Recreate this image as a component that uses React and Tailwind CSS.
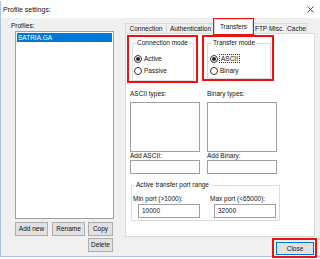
import React from 'react'

function Radio({ checked }) {
  return (
    <span className="flex h-[8px] w-[8px] shrink-0 items-center justify-center rounded-full border border-[#333] bg-white">
      {checked && <span className="h-[4px] w-[4px] rounded-full bg-[#222]" />}
    </span>
  )
}

function Btn({ children, className = '' }) {
  return (
    <div className={`flex h-[14px] items-center justify-center border border-[#adadad] bg-[#e1e1e1] ${className}`}>
      {children}
    </div>
  )
}

function Tab({ label, w, selected }) {
  if (selected) {
    return (
      <div className={`relative z-10 -mb-px flex h-[15px] items-center justify-center border-x border-t border-[#d9d9d9] bg-white ${w}`}>
        {label}
      </div>
    )
  }
  return (
    <div className={`flex h-[10px] items-center justify-center border-l border-t border-[#d9d9d9] bg-[#f0f0f0] last:border-r ${w}`}>
      {label}
    </div>
  )
}

export default function App() {
  return (
    <div className="relative h-[259px] w-[320px] overflow-hidden bg-white font-['Liberation_Sans',Arial,sans-serif] text-[6.5px] leading-[8px] text-[#111]">
      {/* dialog window */}
      <div className="mt-px flex h-[256px] w-[320px] flex-col border-b border-l border-[#a9c3e6]">
        {/* title bar */}
        <div className="flex h-[17px] shrink-0 items-center justify-between bg-white pl-[2px] pr-[6px]">
          <span className="text-[7px]">Profile settings:</span>
          <svg width="7" height="7" viewBox="0 0 7 7">
            <path d="M0.5 0.5L6.5 6.5M6.5 0.5L0.5 6.5" stroke="#222" strokeWidth="0.8" />
          </svg>
        </div>

        {/* body */}
        <div className="flex flex-1 items-start bg-[#f0f0f0]">
          {/* profiles column */}
          <div className="ml-[10px] flex w-[102px] flex-col">
            <div className="mt-[3px] h-[9px] leading-[9px]">Profiles:</div>
            <div className="ml-[4px] mt-px h-[188px] w-[99px] border border-[#a0a0a0] bg-white p-px">
              <div className="h-[9px] bg-[#0078d7] pl-px leading-[9px] text-white">SATRIA.GA</div>
            </div>
            <div className="mt-[3px] flex">
              <Btn className="ml-[4px] w-[33px]">Add new</Btn>
              <Btn className="ml-[4px] w-[33px]">Rename</Btn>
              <Btn className="ml-[3px] w-[25px]">Copy</Btn>
            </div>
            <div className="mt-[2px] flex">
              <Btn className="ml-[77px] w-[25px]">Delete</Btn>
            </div>
          </div>

          {/* tab column */}
          <div className="ml-[12px] flex w-[190px] flex-col">
            <div className="mt-[2px] flex h-[13px] items-end">
              <Tab label="Connection" w="w-[41px]" />
              <Tab label="Authentication" w="w-[48px]" />
              <Tab label="Transfers" w="w-[39px]" selected />
              <Tab label="FTP Misc." w="w-[33px] border-l-0" />
              <Tab label="Cache" w="w-[21px]" />
            </div>

            <div className="flex h-[204px] flex-col border border-[#d9d9d9] bg-white">
              {/* mode groups */}
              <div className="mt-[5px] flex items-start">
                <fieldset className="ml-[6px] h-[42px] w-[62px] border border-[#dcdcdc] px-px">
                  <legend className="ml-[2px] px-px leading-[8px]">Connection mode</legend>
                  <div className="mt-[7px] flex flex-col gap-[3px]">
                    <div className="flex h-[9px] items-center gap-[2px]"><Radio checked />Active</div>
                    <div className="flex h-[9px] items-center gap-[2px]"><Radio />Passive</div>
                  </div>
                </fieldset>
                <fieldset className="ml-[13px] h-[40px] w-[64px] border border-[#dcdcdc] px-[2px]">
                  <legend className="ml-[2px] px-px leading-[8px]">Transfer mode</legend>
                  <div className="mt-[7px] flex flex-col gap-[3px]">
                    <div className="flex h-[9px] items-center gap-px">
                      <Radio checked />
                      <span className="border border-dotted border-[#333] px-px leading-[7px]">ASCII</span>
                    </div>
                    <div className="flex h-[9px] items-center gap-[2px]"><Radio />Binary</div>
                  </div>
                </fieldset>
              </div>

              {/* type lists */}
              <div className="mt-[9px] flex">
                <div className="ml-[4px] flex w-[70px] flex-col">
                  <div className="h-[8px]">ASCII types:</div>
                  <div className="mt-[4px] h-[50px] border border-[#a0a0a0] bg-white" />
                  <div className="h-[8px]">Add ASCII:</div>
                  <div className="h-[14px] border border-[#a0a0a0] bg-white" />
                </div>
                <div className="ml-[7px] flex w-[70px] flex-col">
                  <div className="h-[8px]">Binary types:</div>
                  <div className="mt-[4px] h-[50px] border border-[#a0a0a0] bg-white" />
                  <div className="h-[8px]">Add Binary:</div>
                  <div className="h-[14px] border border-[#a0a0a0] bg-white" />
                </div>
              </div>

              {/* port range */}
              <fieldset className="ml-[5px] mt-[7px] h-[40px] w-[149px] border border-[#dcdcdc] px-0">
                <legend className="ml-[3px] px-px leading-[8px]">Active transfer port range</legend>
                <div className="mt-[5px] flex">
                  <div className="ml-px flex w-[77px] flex-col">
                    <div className="h-[9px] leading-[9px]">Min port (&gt;1000):</div>
                    <div className="ml-[5px] mt-[1px] flex h-[14px] w-[62px] items-center border border-[#a0a0a0] bg-white pl-[3px]">10000</div>
                  </div>
                  <div className="flex w-[67px] flex-col">
                    <div className="h-[9px] leading-[9px]">Max port (&lt;65000):</div>
                    <div className="ml-[4px] mt-[1px] flex h-[14px] w-[62px] items-center border border-[#a0a0a0] bg-white pl-[3px]">32000</div>
                  </div>
                </div>
              </fieldset>
            </div>

            <div className="mt-[5px] flex justify-end pr-px">
              <div className="flex h-[13px] w-[38px] items-center justify-center border border-[#0078d7] bg-[#e1e1e1]">Close</div>
            </div>
          </div>
        </div>
      </div>

      {/* red highlight overlays */}
      <div className="absolute left-[127px] top-[35px] h-[48px] w-[71px] border-2 border-[#f01010]" />
      <div className="absolute left-[213px] top-[18px] h-[17px] w-[41px] border-2 border-[#f01010]" />
      <div className="absolute left-[202px] top-[35px] h-[46px] w-[72px] border-2 border-[#f01010]" />
      <div className="absolute left-[272px] top-[238px] h-[20px] w-[45px] border-2 border-[#f01010]" />
    </div>
  )
}
